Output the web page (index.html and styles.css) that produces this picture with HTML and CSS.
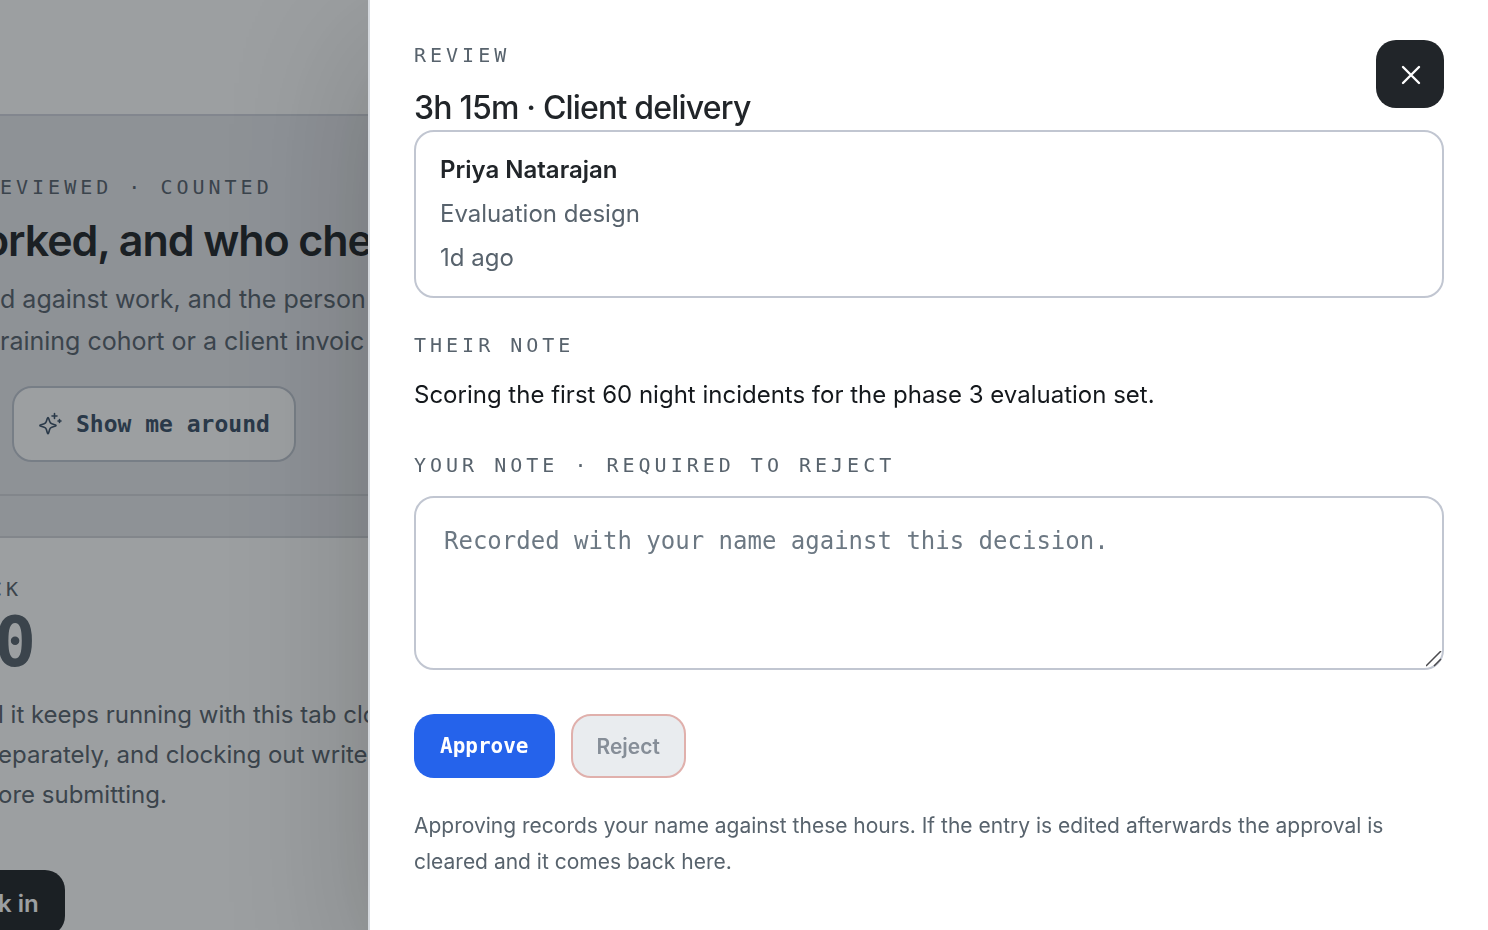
FILE: index.html
```html
<!DOCTYPE html>
<html lang="en">
<head>
    <meta charset="UTF-8">
    <meta name="viewport" content="width=device-width, initial-scale=1.0">
    <title>Review hours</title>
    <link rel="stylesheet" href="styles.css">
</head>
<body>
    <div class="page">
        <header class="topbar"></header>

        <section class="hero">
            <p class="label">EVIEWED · COUNTED</p>
            <h1 class="hero-title">orked, and who che</h1>
            <p class="hero-text">d against work, and the person<br>raining cohort or a client invoic</p>
            <button type="button" class="tour-button">
                <svg class="tour-icon" viewBox="0 0 24 24" fill="none" stroke="currentColor" stroke-width="1.6" stroke-linecap="round" stroke-linejoin="round" aria-hidden="true">
                    <path d="M10 5.5 Q10.4 5.5 10.7 6.5 L11.7 9.6 Q12.2 11.2 13.8 11.7 L17.5 12.9 Q18.5 13.4 17.5 14 L13.8 15.2 Q12.2 15.7 11.7 17.3 L10.6 21 Q10 22.5 9.4 21 L8.3 17.3 Q7.8 15.7 6.2 15.2 L2.4 14 Q1.4 13.4 2.4 12.9 L6.2 11.7 Q7.8 11.2 8.3 9.6 L9.3 6.5 Q9.6 5.5 10 5.5 Z"/>
                    <path d="M16.5 1.5v5M14 4h5M21.5 7.5v3M20 9h3"/>
                </svg>
                Show me around
            </button>
        </section>

        <section class="clock">
            <p class="label clock-label">CK</p>
            <p class="clock-value">0</p>
            <p class="clock-text">l it keeps running with this tab clo<br>eparately, and clocking out writes<br>ore submitting.</p>
            <button type="button" class="clock-button">k in</button>
        </section>
    </div>

    <div class="overlay"></div>

    <aside class="drawer" role="dialog" aria-labelledby="drawerTitle">
        <div class="drawer-head">
            <div>
                <p class="label">REVIEW</p>
                <h2 class="drawer-title" id="drawerTitle">3h 15m · Client delivery</h2>
            </div>
            <button type="button" class="close-button" aria-label="Close">
                <svg class="close-icon" viewBox="0 0 24 24" fill="none" stroke="currentColor" stroke-width="2.4" stroke-linecap="round" aria-hidden="true">
                    <path d="M5 5l16 16M21 5L5 21"/>
                </svg>
            </button>
        </div>

        <div class="person">
            <p class="person-name">Priya Natarajan</p>
            <p>Evaluation design</p>
            <p>1d ago</p>
        </div>

        <p class="label">THEIR NOTE</p>
        <p class="note">Scoring the first 60 night incidents for the phase 3 evaluation set.</p>

        <form class="decision">
            <label class="label" for="reviewNote">YOUR NOTE · REQUIRED TO REJECT</label>
            <div class="note-field">
                <textarea id="reviewNote" name="note" placeholder="Recorded with your name against this decision."></textarea>
                <svg class="grip" viewBox="0 0 16 16" fill="none" stroke="#4a4a4e" stroke-width="1.5" aria-hidden="true">
                    <path d="M0 15L15 0M8 15L15 8"/>
                </svg>
            </div>
            <div class="actions">
                <button type="button" class="approve">Approve</button>
                <button type="button" class="reject" disabled>Reject</button>
            </div>
        </form>

        <p class="footnote">Approving records your name against these hours. If the entry is edited afterwards the approval is cleared and it comes back here.</p>
    </aside>
</body>
</html>
```

FILE: styles.css
```css
* {
    box-sizing: border-box;
}
body {
    margin: 0;
    font-family: Inter, "Liberation Sans", sans-serif;
    font-size: 24px;
    color: #14181c;
    background: #e7e8ed;
}
h1, h2, p {
    margin: 0;
}
button {
    font-family: inherit;
    border: 2px solid transparent;
    border-radius: 20px;
    cursor: pointer;
}
.label {
    display: block;
    font-family: "DejaVu Sans Mono", monospace;
    font-size: 20px;
    line-height: 30px;
    letter-spacing: 4px;
    color: #58636d;
}

/* page behind the drawer */
.page {
    height: 100vh;
    overflow: hidden;
    white-space: nowrap;
    color: #58636d;
}
.topbar {
    height: 116px;
    background: #fff;
    border-bottom: 2px solid #d2d5de;
}
.hero {
    padding: 56px 0 32px;
    margin-bottom: 40px;
    border-bottom: 2px solid #d2d5da;
}
.hero-title {
    margin-left: -17px;
    padding: 12px 0;
    font-size: 43px;
    line-height: 52px;
    font-weight: 600;
    letter-spacing: -0.025em;
    color: #212529;
}
.hero-text {
    font-size: 25px;
    line-height: 42px;
    margin-bottom: 24px;
}
.tour-button {
    display: flex;
    align-items: center;
    gap: 14px;
    height: 76px;
    margin-left: 12px;
    padding: 0 24px;
    font-family: "DejaVu Sans Mono", monospace;
    font-size: 23px;
    font-weight: 700;
    color: #3b5068;
    background: #fff;
    border-color: #c0c6d0;
}
.tour-icon {
    width: 24px;
    height: 24px;
}
.clock {
    padding: 36px 0;
    background: #fff;
    border-top: 2px solid #d2d5da;
}
.clock-label {
    margin-left: -10px;
}
.clock-value {
    font-family: "DejaVu Sans Mono", monospace;
    font-size: 70px;
    line-height: 76px;
    font-weight: 700;
    margin-left: -6px;
}
.clock-text {
    margin: 15px 0 55px -2px;
    line-height: 40px;
}
.clock-button {
    height: 66px;
    padding: 0 24px 0 0;
    margin-left: -4px;
    font-size: 24px;
    font-weight: 600;
    color: #fff;
    background: #212529;
    border-radius: 0 20px 20px 0;
}

.overlay {
    position: fixed;
    inset: 0;
    background: rgba(20, 27, 31, 0.42);
}

/* drawer */
.drawer {
    position: fixed;
    top: 0;
    right: 0;
    bottom: 0;
    width: min(1120px, 100%);
    padding: 40px 44px;
    overflow-y: auto;
    background: #fff;
    border-left: 2px solid #d5d9de;
    box-shadow: 0 48px 128px rgba(20, 20, 20, 0.22);
}
.drawer-head {
    display: flex;
    justify-content: space-between;
    align-items: flex-start;
}
.drawer-title {
    padding-top: 16px;
    font-size: 32px;
    line-height: 44px;
    font-weight: 500;
    letter-spacing: -0.025em;
    color: #212529;
}
.close-button {
    display: flex;
    align-items: center;
    justify-content: center;
    width: 68px;
    height: 68px;
    color: #fff;
    background: #212529;
}
.close-icon {
    width: 24px;
    height: 24px;
    flex: none;
}
.person {
    padding: 16px 24px;
    margin-bottom: 32px;
    line-height: 44px;
    color: #58636d;
    border: 2px solid #c1c6d1;
    border-radius: 20px;
}
.person-name {
    font-weight: 600;
    color: #212529;
}
.note {
    padding: 14px 0 34px;
    line-height: 42px;
}
.note-field {
    position: relative;
    margin: 16px 0 44px;
}
textarea {
    display: block;
    width: 100%;
    height: 174px;
    padding: 24px 28px;
    font-family: "DejaVu Sans Mono", monospace;
    font-size: 24px;
    line-height: 38px;
    background: #fff;
    border: 2px solid #c1c6d1;
    border-radius: 20px;
    resize: vertical;
}
textarea::placeholder {
    color: #6c7883;
}
textarea::-webkit-resizer {
    background: transparent;
}
.grip {
    position: absolute;
    right: 2px;
    bottom: 3px;
    width: 16px;
    height: 16px;
    pointer-events: none;
}
.actions {
    display: flex;
    gap: 16px;
    margin-bottom: 30px;
}
.approve, .reject {
    height: 64px;
    padding: 0 24px;
    font-size: 21px;
}
.approve {
    font-family: "DejaVu Sans Mono", monospace;
    font-weight: 700;
    color: #fff;
    background: #2563eb;
}
.reject {
    font-weight: 600;
    color: #868e98;
    background: #e9ecef;
    border-color: #e0b0ac;
    cursor: default;
}
.footnote {
    font-size: 21px;
    line-height: 36px;
    color: #58636d;
}
```
